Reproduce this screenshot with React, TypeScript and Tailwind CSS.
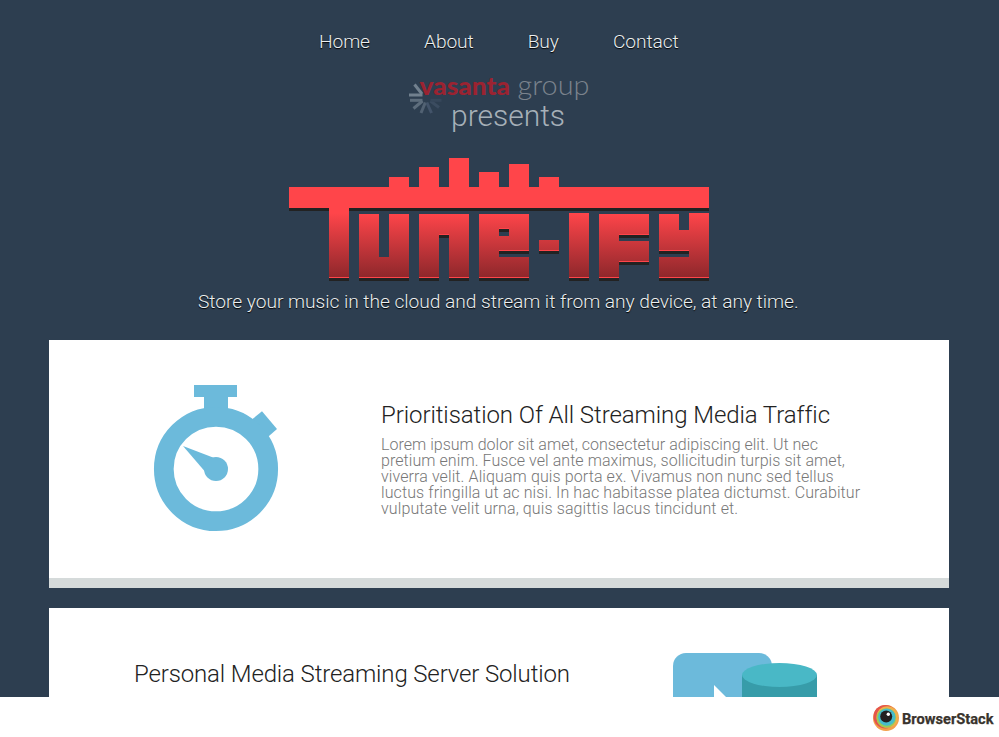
import React from "react";

const navItems = ["Home", "About", "Buy", "Contact"];

function GroupLogo() {
  return (
    <svg className="overflow-visible" width="183" height="60" viewBox="408 75 183 60" role="img" aria-label="vasanta group presents">
      <g strokeWidth="3" fill="none">
        <path d="M414.500 84.500l7.500 9.500" stroke="#71808e" />
        <path d="M409 95h13.500" stroke="#71808e" />
        <path d="M410 100.300h12.500" stroke="#5d6d7c" />
        <path d="M413.500 108.500l9-7.500" stroke="#5d6d7c" />
        <path d="M421 113l4.300-10.500" stroke="#526273" />
        <path d="M431.500 113l-4.700-10.500" stroke="#43546a" />
        <path d="M439 107.500l-8.500-6.500" stroke="#3b4c60" />
        <path d="M441.500 100.300h-11" stroke="#36475a" />
      </g>
      <text x="419.500" y="94.500" fontFamily="Lato, sans-serif" fontWeight="900" fontSize="25.500" fill="#9b2331" textLength="90.500" lengthAdjust="spacingAndGlyphs">vasanta</text>
      <text x="517.500" y="95" fontFamily="Lato, sans-serif" fontWeight="300" fontSize="27.500" fill="#7b838d" textLength="72" lengthAdjust="spacingAndGlyphs">group</text>
      <text x="451" y="126" fontFamily="Roboto, sans-serif" fontWeight="300" fontSize="30" fill="#a6b0b8" textLength="114" lengthAdjust="spacingAndGlyphs">presents</text>
    </svg>
  );
}

// x, y of the equaliser bars above the wordmark
const bars = [
  [389, 177],
  [419, 167],
  [449, 158],
  [479, 172],
  [509, 164],
  [539, 177],
];

const letters =
  "M329 208h20v70h-20zM359 214h20v43h10v-43h20v64h-50zM419 214h50v64h-20v-43h-10v43h-20z" +
  "M479 214h50v37h-30v6h30v21h-50zM499 229v7h10v-7zM539 240h20v11h-20zM569 213h20v65h-20z" +
  "M599 214h50v21h-30v6h30v21h-30v16h-20zM659 214h20v16h10v-17h20v65h-50v-21h30v-6h-30z";

// x, baseline y and width of every downward-facing edge
const edges = [
  [329, 278, 20], [359, 278, 50], [419, 278, 20], [439, 235, 10], [449, 278, 20],
  [479, 278, 50], [499, 229, 10], [499, 251, 30], [539, 251, 20], [569, 278, 20],
  [599, 278, 20], [619, 235, 30], [619, 262, 30], [659, 278, 50], [659, 251, 30],
];

function TuneifyLogo() {
  return (
    <svg width="420" height="124" viewBox="289 157 420 124" shapeRendering="crispEdges" role="img" aria-label="Tune-ify">
      <defs>
        <linearGradient id="fade" gradientUnits="userSpaceOnUse" x1="0" y1="213" x2="0" y2="278">
          <stop offset="0" stopColor="#ff454a" />
          <stop offset="1" stopColor="#8d272b" />
        </linearGradient>
      </defs>
      <path d="M289 208h420v3h-420z" fill="#222222" />
      <path d="M289 187h420v21h-420z" fill="#ff454a" />
      {bars.map(([x, y]) => (
        <rect key={x} x={x} y={y} width="20" height={188 - y} fill="#ff454a" />
      ))}
      <path d={letters} fill="url(#fade)" fillRule="evenodd" />
      {edges.map(([x, y, w]) => (
        <g key={`${x}-${y}`}>
          <rect x={x} y={y - 1} width={w} height="1" fill="#ff454a" />
          <rect x={x} y={y} width={w} height="3" fill="#222222" />
        </g>
      ))}
    </svg>
  );
}

function Stopwatch() {
  return (
    <svg width="126" height="148" viewBox="153 384 126 148" fill="#6cbadb" aria-hidden="true">
      <path d="M194 385h43v12h-9v18h-24v-18h-10z" />
      <path d="M252.500 419L262 411.300L277 429L269 436L262 442L246 425z" />
      <circle cx="216" cy="469" r="52.200" fill="none" stroke="#6cbadb" strokeWidth="19.700" />
      <path d="M183 446L213 457.500L219 466L210 476L204.500 471z" />
      <circle cx="216" cy="469" r="12" />
    </svg>
  );
}

function MediaServer() {
  return (
    <svg width="144" height="120" viewBox="673 653 144 120" aria-hidden="true">
      <rect x="673" y="653" width="99" height="100" rx="13" fill="#6cbadb" />
      <path d="M714 685l30 30h-30z" fill="#fff" />
      <path d="M742 675h75v80h-75z" fill="#379ca9" />
      <ellipse cx="779.500" cy="675" rx="37.500" ry="12" fill="#49b8c6" />
    </svg>
  );
}

function BrowserStackLogo() {
  return (
    <svg className="overflow-visible" width="122" height="28" viewBox="872 704 122 28" role="img" aria-label="BrowserStack">
      <circle cx="886" cy="718" r="13" fill="#f2a04c" />
      <circle cx="885.300" cy="716.700" r="11.800" fill="#e5554a" />
      <circle cx="887.300" cy="717" r="10.800" fill="#efb04c" />
      <circle cx="886.300" cy="718" r="9.800" fill="#9ccb55" />
      <circle cx="886.800" cy="717.200" r="8.600" fill="#46bccb" />
      <circle cx="886.200" cy="716.400" r="6" fill="#231f20" />
      <circle cx="888.300" cy="714.200" r="1.700" fill="#fff" />
      <text x="902" y="723.500" fontFamily="Roboto, sans-serif" fontWeight="700" fontSize="14.500" fill="#39332d" stroke="#39332d" strokeWidth="0.250" textLength="91.500" lengthAdjust="spacingAndGlyphs">BrowserStack</text>
    </svg>
  );
}

export default function App() {
  return (
    <div className="flex h-[737px] w-[999px] flex-col overflow-hidden bg-white font-['Roboto',sans-serif] font-light">
      <main className="flex h-[697px] shrink-0 flex-col items-center overflow-hidden bg-[#2d3e50]">
        <nav className="mt-[30px] flex h-6 w-full gap-[54px] pl-[319px] text-[19.2px] leading-6 tracking-[-0.08px] text-[#ecf0f1] [text-shadow:0_1px_1px_#000]">
          {navItems.map((item) => (
            <a key={item} href="#" className="whitespace-nowrap">{item}</a>
          ))}
        </nav>
        <div className="mt-[21px] h-[60px]">
          <GroupLogo />
        </div>
        <h1 className="mt-[22px] h-[124px] w-[421px]">
          <TuneifyLogo />
        </h1>
        <p className="mt-[9px] h-6 w-full whitespace-nowrap pl-[198px] text-[19.2px] leading-6 tracking-[-0.04px] text-[#ecf0f1] [text-shadow:0_1px_1px_#000]">
          Store your music in the cloud and stream it from any device, at any time.
        </p>
        <section className="mt-[26px] mr-px flex h-[248px] w-[900px] shrink-0 border-b-10 border-[#d5dada] bg-white">
          <div className="w-[332px] shrink-0 pt-11 pl-[104px]">
            <Stopwatch />
          </div>
          <div className="w-[490px] pt-[60px]">
            <h2 className="whitespace-nowrap text-2xl leading-[30px] tracking-[-0.08px] text-[#222]">Prioritisation Of All Streaming Media Traffic</h2>
            <p className="mt-[7px] whitespace-nowrap text-base leading-4 text-[#777]">
              <span className="tracking-[0.02px]">Lorem ipsum dolor sit amet, consectetur adipiscing elit. Ut nec</span><br />
              <span className="tracking-[0.065px]">pretium enim. Fusce vel ante maximus, sollicitudin turpis sit amet,</span><br />
              <span className="tracking-[0.1px]">viverra velit. Aliquam quis porta ex. Vivamus non nunc sed tellus</span><br />
              <span className="tracking-[0.1px]">luctus fringilla ut ac nisi. In hac habitasse platea dictumst. Curabitur</span><br />
              <span className="tracking-[0.11px]">vulputate velit urna, quis sagittis lacus tincidunt et.</span>
            </p>
          </div>
        </section>
        <section className="mt-5 mr-px flex h-[248px] w-[900px] shrink-0 bg-white">
          <div className="w-[624px] shrink-0 pt-[51px] pl-[85px]">
            <h2 className="whitespace-nowrap text-2xl leading-[30px] tracking-[-0.14px] text-[#222]">Personal Media Streaming Server Solution</h2>
          </div>
          <div className="pt-[45px]">
            <MediaServer />
          </div>
        </section>
      </main>
      <footer className="flex h-10 shrink-0 justify-end pt-[7px] pr-[5px]">
        <BrowserStackLogo />
      </footer>
    </div>
  );
}
